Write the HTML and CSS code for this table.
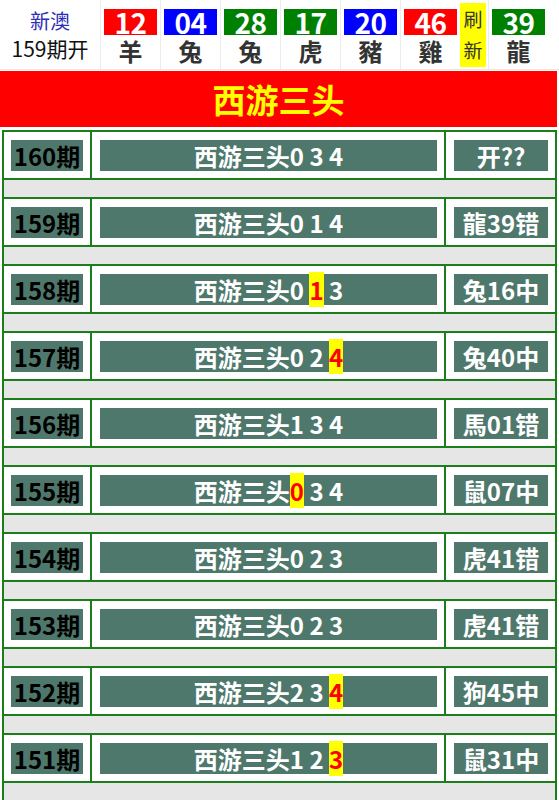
FILE: index.html
```html
<!DOCTYPE html>
<html lang="zh">
<head>
    <meta charset="UTF-8">
    <meta name="viewport" content="width=device-width, initial-scale=1.0">
    <title>西游三头</title>
    <link rel="stylesheet" href="styles.css">
</head>
<body>

    <div class="topbar">
        <div class="issue">
            <div class="issue-name">新澳</div>
            <div class="issue-no">159期开</div>
        </div>
        <div class="ball"><span class="num red">12</span><span class="pet">羊</span></div>
        <div class="ball"><span class="num blue">04</span><span class="pet">兔</span></div>
        <div class="ball"><span class="num green">28</span><span class="pet">兔</span></div>
        <div class="ball"><span class="num green">17</span><span class="pet">虎</span></div>
        <div class="ball"><span class="num blue">20</span><span class="pet">豬</span></div>
        <div class="ball"><span class="num red">46</span><span class="pet">雞</span></div>
        <div class="refresh">刷<br>新</div>
        <div class="ball"><span class="num green">39</span><span class="pet">龍</span></div>
    </div>

    <div class="banner">西游三头</div>

    <table class="list">
        <colgroup>
            <col class="c1">
            <col class="c2">
            <col class="c3">
        </colgroup>
        <tr>
            <td><span class="box qi">160期</span></td>
            <td><span class="box main">西游三头0 3 4</span></td>
            <td><span class="box res">开??</span></td>
        </tr>
        <tr class="gap"><td colspan="3"></td></tr>
        <tr>
            <td><span class="box qi">159期</span></td>
            <td><span class="box main">西游三头0 1 4</span></td>
            <td><span class="box res">龍39错</span></td>
        </tr>
        <tr class="gap"><td colspan="3"></td></tr>
        <tr>
            <td><span class="box qi">158期</span></td>
            <td><span class="box main">西游三头0 <span class="hit">1</span> 3</span></td>
            <td><span class="box res">兔16中</span></td>
        </tr>
        <tr class="gap"><td colspan="3"></td></tr>
        <tr>
            <td><span class="box qi">157期</span></td>
            <td><span class="box main">西游三头0 2 <span class="hit">4</span></span></td>
            <td><span class="box res">兔40中</span></td>
        </tr>
        <tr class="gap"><td colspan="3"></td></tr>
        <tr>
            <td><span class="box qi">156期</span></td>
            <td><span class="box main">西游三头1 3 4</span></td>
            <td><span class="box res">馬01错</span></td>
        </tr>
        <tr class="gap"><td colspan="3"></td></tr>
        <tr>
            <td><span class="box qi">155期</span></td>
            <td><span class="box main">西游三头<span class="hit">0</span> 3 4</span></td>
            <td><span class="box res">鼠07中</span></td>
        </tr>
        <tr class="gap"><td colspan="3"></td></tr>
        <tr>
            <td><span class="box qi">154期</span></td>
            <td><span class="box main">西游三头0 2 3</span></td>
            <td><span class="box res">虎41错</span></td>
        </tr>
        <tr class="gap"><td colspan="3"></td></tr>
        <tr>
            <td><span class="box qi">153期</span></td>
            <td><span class="box main">西游三头0 2 3</span></td>
            <td><span class="box res">虎41错</span></td>
        </tr>
        <tr class="gap"><td colspan="3"></td></tr>
        <tr>
            <td><span class="box qi">152期</span></td>
            <td><span class="box main">西游三头2 3 <span class="hit">4</span></span></td>
            <td><span class="box res">狗45中</span></td>
        </tr>
        <tr class="gap"><td colspan="3"></td></tr>
        <tr>
            <td><span class="box qi">151期</span></td>
            <td><span class="box main">西游三头1 2 <span class="hit">3</span></span></td>
            <td><span class="box res">鼠31中</span></td>
        </tr>
        <tr class="gap"><td colspan="3"></td></tr>
    </table>

</body>
</html>
```

FILE: styles.css
```css
body {
    margin: 0;
    padding: 0;
    background-color: #fff;
    font-family: "Noto Sans CJK SC", "Noto Sans", sans-serif;
    color: #000;
    width: 559px;
}

/* top draw bar */
.topbar {
    display: flex;
    height: 70px;
    border-bottom: 1px solid #e6e6e6;
    box-sizing: border-box;
}

.issue {
    width: 100px;
    text-align: center;
    font-size: 20px;
    line-height: 26px;
    padding-top: 8px;
}

.issue-name {
    color: #2d2db5;
}

.issue-no {
    color: #111;
    font-size: 21px;
    margin-top: 1px;
}

.ball {
    width: 60px;
    padding: 9px 3px 0 3px;
    box-sizing: border-box;
    display: flex;
    flex-direction: column;
    border-left: 1px solid #ececec;
}

.num {
    display: block;
    height: 26px;
    line-height: 26px;
    text-align: center;
    color: #fff;
    font-size: 28px;
    font-weight: bold;
    letter-spacing: -0.5px;
}

.red { background-color: #ff0000; }
.blue { background-color: #0000ff; }
.green { background-color: #008000; }

.pet {
    display: block;
    text-align: center;
    font-size: 24px;
    font-weight: bold;
    line-height: 26px;
    margin-top: 3px;
    color: #333;
}

.refresh {
    width: 26px;
    margin: 3px 2px 2px 0;
    background-color: #ffff00;
    color: #333;
    font-size: 19px;
    line-height: 31px;
    text-align: center;
}

/* red title */
.banner {
    width: 557px;
    height: 56px;
    margin-top: 1px;
    background-color: #ff0000;
    color: #ffff00;
    font-size: 33px;
    font-weight: bold;
    line-height: 56px;
    text-align: center;
}

/* list */
.list {
    width: 555px;
    margin: 3px 0 0 2px;
    border-spacing: 0;
    border-top: 2px solid #1b7d1b;
    border-left: 2px solid #1b7d1b;
    table-layout: fixed;
}

.c1 { width: 88px; }
.c2 { width: 354px; }

.list td {
    border-right: 2px solid #1b7d1b;
    border-bottom: 2px solid #1b7d1b;
    padding: 8px 7px 7px 8px;
    text-align: center;
}

.list td:first-child {
    padding-left: 7px;
}

.box {
    display: block;
    height: 31px;
    line-height: 32px;
    background-color: #4f786c;
    font-size: 24px;
    font-weight: bold;
    white-space: nowrap;
}

.qi {
    color: #000;
}

.main, .res {
    color: #fff;
}

.hit {
    background-color: #ffff00;
    color: #ff0000;
}

.list .gap td {
    height: 17px;
    padding: 0;
    background-color: #e6e6e6;
}
```
